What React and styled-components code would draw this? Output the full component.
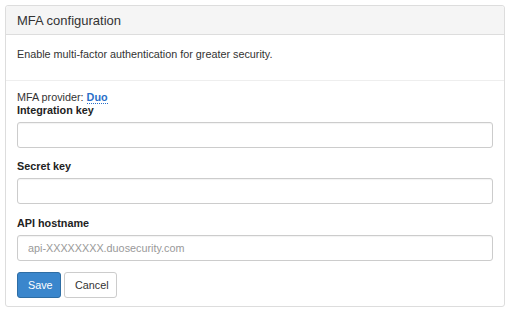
import React from "react";
import styled, { createGlobalStyle } from "styled-components";

const Global = createGlobalStyle`
  html, body { margin: 0; padding: 0; background: #fff; }
  body { font-family: "Liberation Sans", Arial, sans-serif; color: #333; }
  * { box-sizing: border-box; }
`;

const Page = styled.div`
  padding: 5px 7px 5px 5px;
`;

const Panel = styled.section`
  border: 1px solid #ddd;
  border-radius: 3px;
  background: #fff;
`;

const Header = styled.header`
  background: #f5f5f5;
  border-bottom: 1px solid #ddd;
  height: 29px;
  padding: 1px 11px 0;
  display: flex;
  align-items: center;
  font-size: 13px;
  color: #333;
  border-radius: 3px 3px 0 0;
`;

const Intro = styled.div`
  padding: 13px 11px 0;
  height: 46px;
  font-size: 10.8px;
  border-bottom: 1px solid #eee;
`;

const Form = styled.form`
  padding: 10px 11px 8px;
  display: flex;
  flex-direction: column;
`;

const Provider = styled.div`
  font-size: 10.8px;
  line-height: 13px;
`;

const Duo = styled.a`
  color: #2a6fc9;
  font-weight: bold;
  text-decoration: none;
  border-bottom: 1px dotted #2a6fc9;
`;

const Field = styled.div`
  display: flex;
  flex-direction: column;
  margin-bottom: ${(p) => p.$mb}px;
`;

const Label = styled.label`
  font-size: 10.8px;
  font-weight: bold;
  line-height: 13px;
  margin-bottom: 5px;
  color: #222;
`;

const Input = styled.input`
  height: 26px;
  border: 1px solid #ccc;
  border-radius: 3px;
  padding: 0 10px;
  font-family: "Liberation Sans", Arial, sans-serif;
  font-size: 10.8px;
  color: #333;
  box-shadow: inset 0 1px 1px rgba(0,0,0,0.05);
  &::placeholder { color: #999; }
`;

const Buttons = styled.div`
  display: flex;
  gap: 3px;
`;

const Button = styled.button`
  height: 26px;
  padding: 0 10px;
  border-radius: 3px;
  font-family: "Liberation Sans", Arial, sans-serif;
  font-size: 10.8px;
  border: 1px solid ${(p) => (p.$primary ? "#2e6da4" : "#ccc")};
  background: ${(p) => (p.$primary ? "#3a86cc" : "#fff")};
  color: ${(p) => (p.$primary ? "#fff" : "#333")};
  width: ${(p) => p.$w}px;
`;

export default function App() {
  return (
    <>
      <Global />
      <Page>
        <Panel>
          <Header>MFA configuration</Header>
          <Intro>Enable multi-factor authentication for greater security.</Intro>
          <Form onSubmit={(e) => e.preventDefault()}>
            <Provider>
              MFA provider: <Duo href="#">Duo</Duo>
            </Provider>
            <Field $mb={12}>
              <Label>Integration key</Label>
              <Input />
            </Field>
            <Field $mb={13}>
              <Label>Secret key</Label>
              <Input />
            </Field>
            <Field $mb={11}>
              <Label>API hostname</Label>
              <Input placeholder="api-XXXXXXXX.duosecurity.com" />
            </Field>
            <Buttons>
              <Button $primary $w={44}>Save</Button>
              <Button $w={53}>Cancel</Button>
            </Buttons>
          </Form>
        </Panel>
      </Page>
    </>
  );
}
